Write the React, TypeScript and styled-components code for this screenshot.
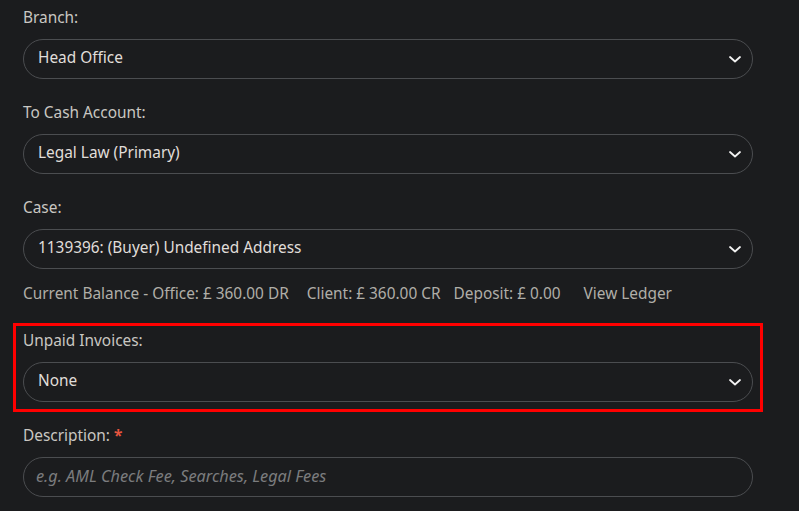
import React from 'react'
import styled, { createGlobalStyle } from 'styled-components'

const GlobalStyle = createGlobalStyle`
  html, body {
    margin: 0;
    padding: 0;
    background: #1b1c1e;
  }
  body {
    font-family: "Noto Sans", "Open Sans", sans-serif;
    font-size: 15.4px;
    color: #dee2e6;
  }
`

const Form = styled.div`
  width: 730px;
  margin-left: 23px;
  padding-top: 6px;
`

const Group = styled.div<{ $mb?: number }>`
  margin-bottom: ${(p) => (p.$mb ?? 22)}px;
`

const Label = styled.div`
  line-height: 24px;
  margin-bottom: 9px;
  color: #c9c7c2;
`

const Required = styled.span`
  color: #e8553f;
  font-weight: 700;
  margin-left: 4px;
`

const SelectBox = styled.div`
  box-sizing: border-box;
  height: 40px;
  border: 1px solid #4b4d50;
  border-radius: 20px;
  padding: 0 10px 3px 14px;
  display: flex;
  align-items: center;
  justify-content: space-between;
  color: #e0deda;
`

const Icon = styled.svg`
  margin-top: 3px;
`

const Placeholder = styled.span`
  font-style: italic;
  font-size: 16.3px;
  color: #7b7c7e;
  margin-left: -2px;
`

const Balance = styled.div`
  line-height: 24px;
  color: #b0aea8;
  margin-bottom: 17px;
  white-space: nowrap;
`

const BalanceItem = styled.span<{ $gap: number }>`
  margin-right: ${(p) => p.$gap}px;
`

const Highlight = styled.div`
  margin: 0 -10px 12px;
  padding: 3px 7px 7px;
  border: 3px solid #ff0000;
`

function Chevron() {
  return (
    <Icon width="14" height="9" viewBox="0 0 14 9" fill="none">
      <polyline points="2,2 7,6.5 12,2" stroke="#f2f2f2" strokeWidth="1.8" strokeLinecap="round" strokeLinejoin="round" />
    </Icon>
  )
}

function Select({ value }: { value: string }) {
  return (
    <SelectBox>
      <span>{value}</span>
      <Chevron />
    </SelectBox>
  )
}

export default function App() {
  return (
    <>
      <GlobalStyle />
      <Form>
        <Group>
          <Label>Branch:</Label>
          <Select value="Head Office" />
        </Group>
        <Group>
          <Label>To Cash Account:</Label>
          <Select value="Legal Law (Primary)" />
        </Group>
        <Group $mb={13}>
          <Label>Case:</Label>
          <Select value="1139396: (Buyer) Undefined Address" />
        </Group>
        <Balance>
          <BalanceItem $gap={18}>Current Balance - Office: £ 360.00 DR</BalanceItem>
          <BalanceItem $gap={13}>Client: £ 360.00 CR</BalanceItem>
          <BalanceItem $gap={23}>Deposit: £ 0.00</BalanceItem>
          <BalanceItem $gap={0}>View Ledger</BalanceItem>
        </Balance>
        <Highlight>
          <Label>Unpaid Invoices:</Label>
          <Select value="None" />
        </Highlight>
        <Group>
          <Label>
            Description:<Required>*</Required>
          </Label>
          <SelectBox>
            <Placeholder>e.g. AML Check Fee, Searches, Legal Fees</Placeholder>
          </SelectBox>
        </Group>
      </Form>
    </>
  )
}
